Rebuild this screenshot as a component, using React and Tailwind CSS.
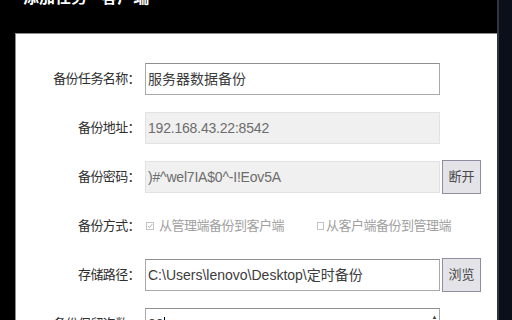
export default function App() {
  const label = "w-[130px] shrink-0 pr-[6px] text-right text-[13px] tracking-[-0.6px] text-[#2f2f2f] font-['Liberation_Serif','Noto_Sans_CJK_SC',serif] leading-[32px]";
  const cjk = "font-['Liberation_Sans','Noto_Sans_CJK_SC',sans-serif]";
  return (
    <div className={`w-[512px] h-[320px] bg-black flex overflow-hidden ${cjk}`}>
      <div className="w-[497px] shrink-0 flex flex-col">
        <div className="h-[33px] shrink-0 pl-[23px] overflow-hidden">
          <div className="-mt-[12px] text-white text-[16px] font-bold leading-[20px]">添加任务 - 客户端</div>
        </div>
        <div className="flex flex-1 min-h-0">
          <div className="w-[15px] shrink-0 bg-black" />
          <div className="flex-1 bg-white border-l border-t border-[#8c8c8c] pt-[29px] flex flex-col gap-[17px] overflow-hidden">
            <div className="flex items-center h-[32px] shrink-0">
              <div className={label}>备份任务名称：</div>
              <div className="ml-[-1px] w-[295px] h-[32px] border border-[#a9a9a9] border-t-[#8f8f8f] bg-white flex items-center px-[2px] text-[14px] text-[#3c3c3c]">服务器数据备份</div>
            </div>
            <div className="flex items-center h-[32px] shrink-0">
              <div className={label}>备份地址：</div>
              <div className="ml-[-1px] w-[295px] h-[32px] border border-[#e2e2e2] bg-[#f0f0f0] flex items-center px-[2px] text-[14px] tracking-[-0.2px] text-[#6d6d6d]">192.168.43.22:8542</div>
            </div>
            <div className="flex items-center h-[32px] shrink-0">
              <div className={label}>备份密码：</div>
              <div className="ml-[-1px] w-[295px] h-[32px] border border-[#e2e2e2] bg-[#f0f0f0] flex items-center px-[2px] text-[14px] tracking-[-0.2px] text-[#6d6d6d]">)#^wel7IA$0^-I!Eov5A</div>
              <div className="ml-[2px] w-[39px] h-[34px] border border-[#8d8da0] bg-[#e3e3e8] flex items-center justify-center text-[13px] text-[#4a4a4a] font-['Liberation_Serif','Noto_Sans_CJK_SC',serif]">断开</div>
            </div>
            <div className="flex items-center h-[32px] shrink-0">
              <div className={label}>备份方式：</div>
              <div className="flex items-center text-[13px] tracking-[-0.5px] text-[#a0a0a0] font-['Liberation_Serif','Noto_Sans_CJK_SC',serif]">
                <span className="ml-[0px] w-[8px] h-[8px] border border-[#c4c4c4] flex items-center justify-center">
                  <svg width="6" height="6" viewBox="0 0 6 6"><path d="M0.8 3 L2.4 4.6 L5.2 1.2" stroke="#a8a8a8" strokeWidth="1" fill="none" /></svg>
                </span>
                <span className="ml-[5px]">从管理端备份到客户端</span>
                <span className="ml-[33px] w-[7px] h-[8px] border border-[#c4c4c4]" />
                <span className="ml-[2px]">从客户端备份到管理端</span>
              </div>
            </div>
            <div className="flex items-center h-[32px] shrink-0">
              <div className={label}>存储路径：</div>
              <div className="ml-[-1px] w-[295px] h-[32px] border border-[#a9a9a9] border-t-[#8f8f8f] bg-white flex items-center px-[2px] text-[14px] text-[#3c3c3c]">C:\Users\lenovo\Desktop\定时备份</div>
              <div className="ml-[2px] w-[39px] h-[34px] border border-[#8d8da0] bg-[#e3e3e8] flex items-center justify-center text-[13px] text-[#4a4a4a] font-['Liberation_Serif','Noto_Sans_CJK_SC',serif]">浏览</div>
            </div>
            <div className="flex items-start h-[32px] shrink-0">
              <div className={label}>备份保留次数：</div>
              <div className="ml-[-1px] w-[295px] h-[32px] border border-[#a9a9a9] border-t-[#8f8f8f] bg-white flex items-center pl-[2px] pr-[1px] text-[14px] text-[#3c3c3c] relative">
                <span>30</span><span className="w-[1px] h-[15px] bg-black" />
                <div className="absolute right-[1px] top-[2px] w-[7px] h-[12px] flex items-center justify-center text-[6px] text-[#444]">▲</div>
              </div>
            </div>
          </div>
        </div>
      </div>
      <div className="flex-1 bg-[#0b0f1a] border-l-2 border-[#2e3443]" />
    </div>
  );
}
